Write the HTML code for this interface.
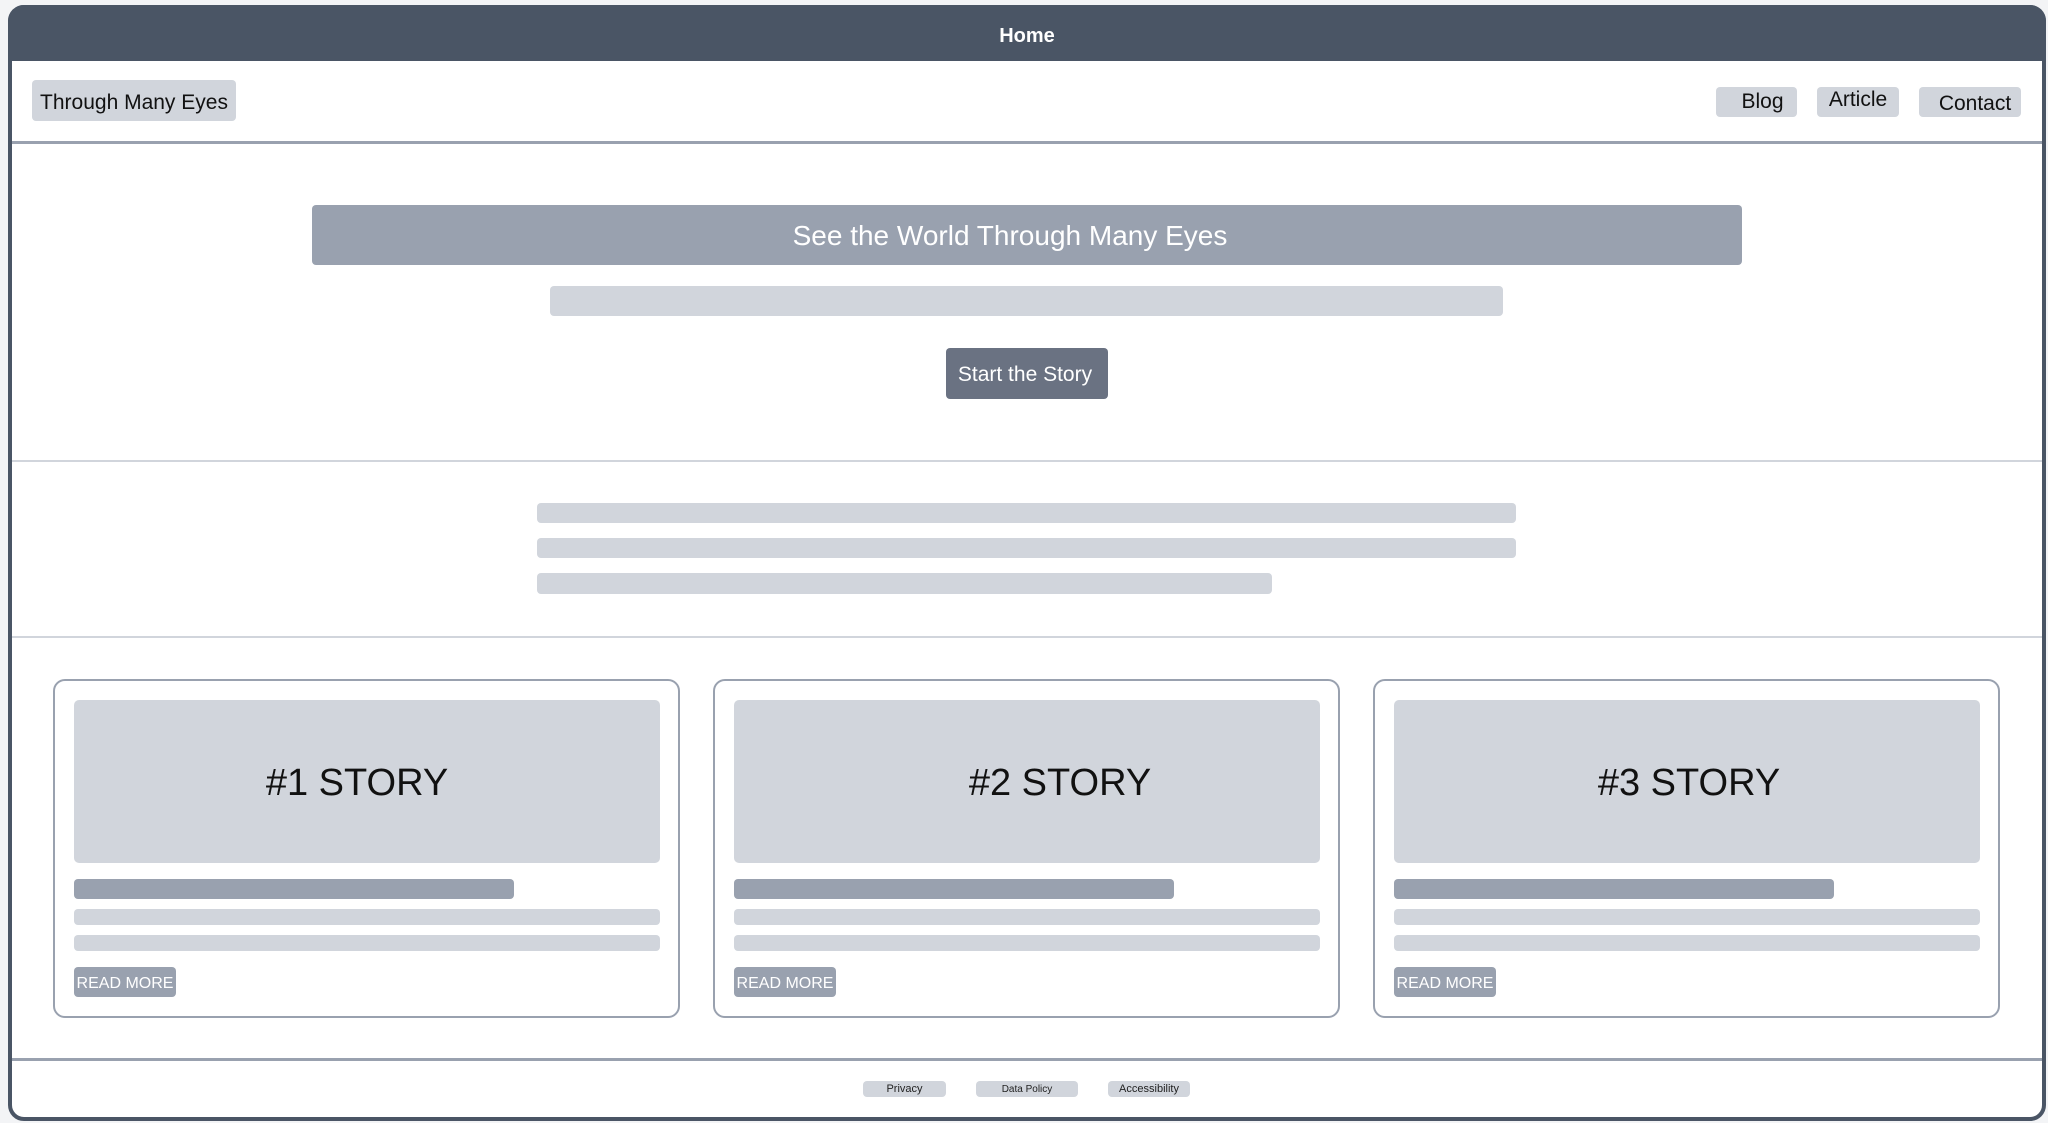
<!DOCTYPE html>
<html><head><meta charset="utf-8"><style>
*{margin:0;padding:0;box-sizing:border-box}
body{width:2048px;height:1123px;background:#f3f4f6;position:relative;overflow:hidden;font-family:"Liberation Sans",sans-serif}
.a{position:absolute}
.frame{left:8px;top:5px;width:2038px;height:1116px;border:4px solid #4a5565;border-radius:16px;background:#fff;overflow:hidden}
.hdr{left:8px;top:5px;width:2038px;height:56px;background:#4a5565;border-radius:16px 16px 0 0;color:#fff;font-weight:bold;font-size:20px;text-align:center;line-height:62px}
.pill{background:#d1d5dc;border-radius:4px;color:#111;font-size:21px;display:flex;align-items:center;justify-content:center}
.bar{border-radius:4px}
.l{background:#d1d5dc}
.d{background:#99a1af}
.card{width:627px;height:339px;border:2px solid #99a1af;border-radius:12px;top:679px;background:#fff}
.img{left:19px;top:19px;width:586px;height:163px;background:#d1d5dc;border-radius:5px;font-size:38px;color:#111;display:flex;align-items:center;justify-content:center;padding-top:4px}
.rm{left:19px;top:286px;width:102px;height:30px;background:#99a1af;border-radius:4px;color:#fff;font-size:16px;display:flex;align-items:center;justify-content:center;padding-top:3px}
.fp{background:#d1d5dc;border-radius:4px;font-size:11px;color:#222;display:flex;align-items:center;justify-content:center;height:16px;top:1081px}
</style></head><body>
<div class="a frame"></div>
<div class="a hdr">Home</div>
<div class="a pill" style="left:32px;top:80px;width:204px;height:41px;padding-top:4px">Through Many Eyes</div>
<div class="a pill" style="left:1716px;top:87px;width:81px;height:30px;padding-left:12px">Blog</div>
<div class="a pill" style="left:1817px;top:87px;width:82px;height:30px;padding-bottom:4px">Article</div>
<div class="a pill" style="left:1919px;top:87px;width:102px;height:30px;padding-top:4px;padding-left:10px">Contact</div>
<div class="a" style="left:12px;top:141px;width:2030px;height:3px;background:#99a1af"></div>
<div class="a bar d" style="left:312px;top:205px;width:1430px;height:60px;color:#fff;font-size:28px;text-align:center;line-height:62px;padding-right:34px">See the World Through Many Eyes</div>
<div class="a bar l" style="left:550px;top:286px;width:953px;height:30px"></div>
<div class="a bar" style="left:946px;top:348px;width:162px;height:51px;background:#6a7282;color:#fff;font-size:21px;text-align:center;line-height:53px;padding-right:4px">Start the Story</div>
<div class="a" style="left:12px;top:460px;width:2030px;height:2px;background:#d1d5dc"></div>
<div class="a bar l" style="left:537px;top:503px;width:979px;height:20px"></div>
<div class="a bar l" style="left:537px;top:538px;width:979px;height:20px"></div>
<div class="a bar l" style="left:537px;top:573px;width:735px;height:21px"></div>
<div class="a" style="left:12px;top:636px;width:2030px;height:2px;background:#d1d5dc"></div>

<div class="a card" style="left:53px">
<div class="a img" style="padding-right:20px">#1 STORY</div>
<div class="a bar d" style="left:19px;top:198px;width:440px;height:20px"></div>
<div class="a bar l" style="left:19px;top:228px;width:586px;height:16px"></div>
<div class="a bar l" style="left:19px;top:254px;width:586px;height:16px"></div>
<div class="a rm">READ MORE</div></div>
<div class="a card" style="left:713px">
<div class="a img" style="padding-left:66px">#2 STORY</div>
<div class="a bar d" style="left:19px;top:198px;width:440px;height:20px"></div>
<div class="a bar l" style="left:19px;top:228px;width:586px;height:16px"></div>
<div class="a bar l" style="left:19px;top:254px;width:586px;height:16px"></div>
<div class="a rm">READ MORE</div></div>
<div class="a card" style="left:1373px">
<div class="a img" style="padding-left:4px">#3 STORY</div>
<div class="a bar d" style="left:19px;top:198px;width:440px;height:20px"></div>
<div class="a bar l" style="left:19px;top:228px;width:586px;height:16px"></div>
<div class="a bar l" style="left:19px;top:254px;width:586px;height:16px"></div>
<div class="a rm">READ MORE</div></div>

<div class="a" style="left:12px;top:1058px;width:2030px;height:3px;background:#99a1af"></div>
<div class="a fp" style="left:863px;width:83px">Privacy</div>
<div class="a fp" style="left:976px;width:102px;font-size:10px">Data Policy</div>
<div class="a fp" style="left:1108px;width:82px">Accessibility</div>
</body></html>
